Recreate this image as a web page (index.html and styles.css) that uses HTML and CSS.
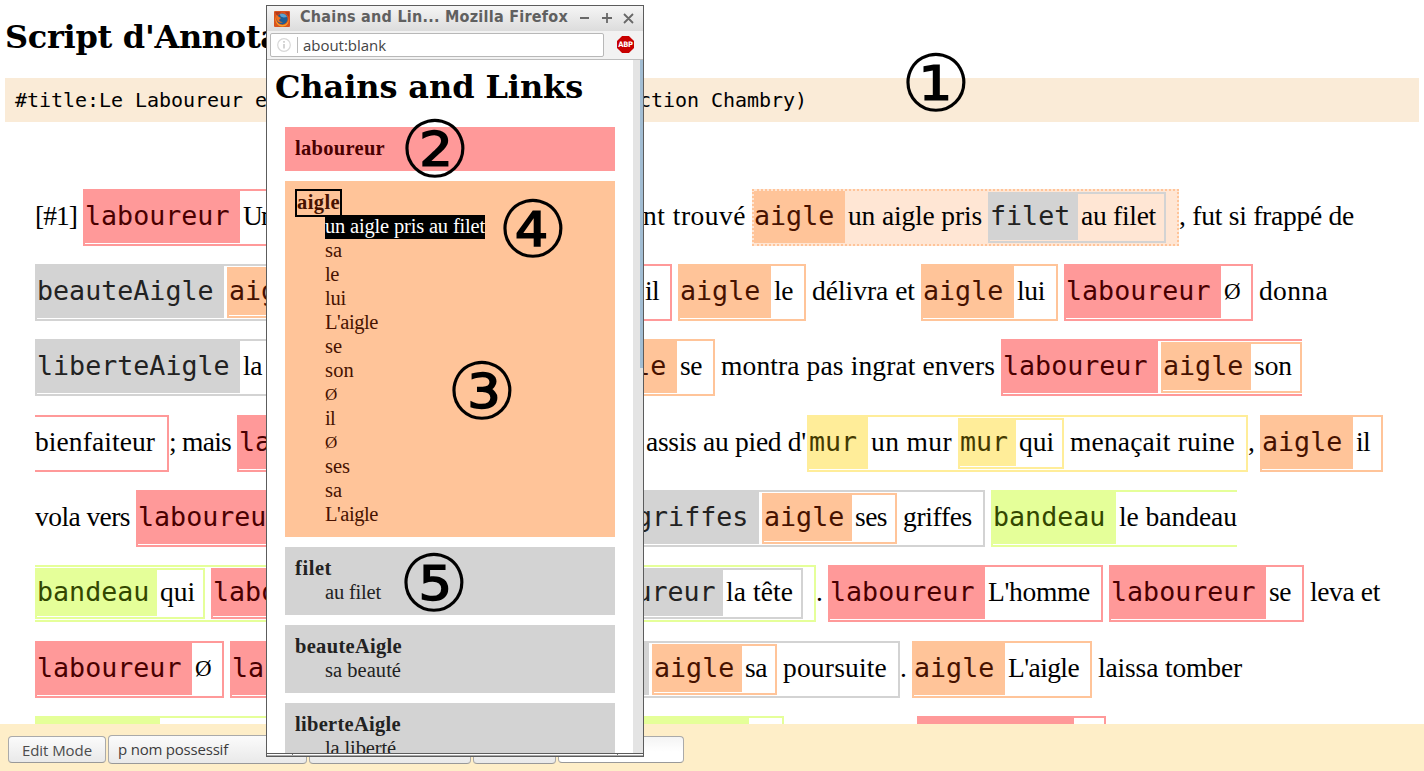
FILE: index.html
```html
<!DOCTYPE html>
<html lang="fr">
<head>
<meta charset="utf-8">
<title>Script d'Annotation</title>
<link rel="stylesheet" href="styles.css">
</head>
<body>
<main class="page">
  <h1 class="page-title">Script d'Annotation</h1>
  <div class="meta">#title:Le Laboureur et l'Aigle (Ésope, fables, traduction Chambry)</div>
  <section class="doc">
    <div class="line">
      <span class="t" data-x="35,77">[#1]</span>
      <div class="m red" data-x="83,400"><b class="l" data-x="83,240">laboureur</b><span class="t" data-x="243,273">Un</span></div>
      <span class="t" data-x="643,746">nt trouvé</span>
      <div class="m orange selected" data-x="752,1179"><b class="l" data-x="752,845">aigle</b><span class="t" data-x="848,982">un aigle pris</span><div class="m grey" data-x="988,1166"><b class="l" data-x="988,1078">filet</b><span class="t" data-x="1081,1156">au filet</span></div></div>
      <span class="t" data-x="1179,1354">, fut si frappé de</span>
    </div>
    <div class="line">
      <div class="m grey" data-x="35,490"><b class="l" data-x="35,224">beauteAigle</b><div class="m orange" data-x="227,400"><b class="l" data-x="227,317">aigle</b></div></div>
      <div class="m red" data-x="496,672"><span class="t" data-x="645,659">il</span></div>
      <div class="m orange" data-x="678,806"><b class="l" data-x="678,771">aigle</b><span class="t" data-x="774,793">le</span></div>
      <span class="t" data-x="812,915">délivra et</span>
      <div class="m orange" data-x="921,1058"><b class="l" data-x="921,1014">aigle</b><span class="t" data-x="1017,1045">lui</span></div>
      <div class="m red" data-x="1064,1253"><b class="l" data-x="1064,1221">laboureur</b><span class="t small" data-x="1224,1240">Ø</span></div>
      <span class="t" data-x="1259,1328">donna</span>
    </div>
    <div class="line">
      <div class="m grey" data-x="35,400"><b class="l" data-x="35,240">liberteAigle</b><span class="t" data-x="243,262">la</span></div>
      <div class="m orange" data-x="584,715"><b class="l" data-x="584,677">aigle</b><span class="t" data-x="680,702">se</span></div>
      <span class="t" data-x="721,995">montra pas ingrat envers</span>
      <div class="m red open-right" data-x="1001,1302"><b class="l" data-x="1001,1158">laboureur</b><div class="m orange" data-x="1161,1302"><b class="l" data-x="1161,1251">aigle</b><span class="t" data-x="1254,1292">son</span></div></div>
    </div>
    <div class="line">
      <div class="m red open-left" data-x="35,169"><span class="t" data-x="35,155">bienfaiteur</span></div>
      <span class="t" data-x="169,231">; mais</span>
      <div class="m red" data-x="237,420"><b class="l" data-x="237,394">laboureur</b></div>
      <span class="t" data-x="646,806">assis au pied d'</span>
      <div class="m yellow" data-x="807,1248"><b class="l" data-x="807,868">mur</b><span class="t" data-x="871,952">un mur</span><div class="m yellow" data-x="958,1064"><b class="l" data-x="958,1016">mur</b><span class="t" data-x="1019,1054">qui</span></div><span class="t" data-x="1070,1235">menaçait ruine</span></div>
      <span class="t" data-x="1248,1254">,</span>
      <div class="m orange" data-x="1260,1383"><b class="l" data-x="1260,1353">aigle</b><span class="t" data-x="1356,1370">il</span></div>
    </div>
    <div class="line">
      <span class="t" data-x="35,130">vola vers</span>
      <div class="m red" data-x="136,400"><b class="l" data-x="136,293">laboureur</b></div>
      <div class="m grey" data-x="634,985"><b class="l" data-x="634,759">griffes</b><div class="m orange" data-x="762,897"><b class="l" data-x="762,852">aigle</b><span class="t" data-x="855,887">ses</span></div><span class="t" data-x="903,972">griffes</span></div>
      <div class="m lime open-right" data-x="991,1237"><b class="l" data-x="991,1116">bandeau</b><span class="t" data-x="1119,1237">le bandeau</span></div>
    </div>
    <div class="line">
      <div class="m lime open-left" data-x="35,816"><div class="m lime" data-x="35,205"><b class="l" data-x="35,157">bandeau</b><span class="t" data-x="160,195">qui</span></div><div class="m red" data-x="211,420"><b class="l" data-x="211,365">laboureur</b></div><div class="m grey" data-x="505,803"><b class="l" data-x="505,723">teteLaboureur</b><span class="t" data-x="726,793">la tête</span></div></div>
      <span class="t" data-x="816,822">.</span>
      <div class="m red" data-x="828,1103"><b class="l" data-x="828,985">laboureur</b><span class="t" data-x="988,1090">L'homme</span></div>
      <div class="m red" data-x="1109,1304"><b class="l" data-x="1109,1266">laboureur</b><span class="t" data-x="1269,1291">se</span></div>
      <span class="t" data-x="1310,1380">leva et</span>
    </div>
    <div class="line">
      <div class="m red" data-x="35,224"><b class="l" data-x="35,192">laboureur</b><span class="t small" data-x="195,211">Ø</span></div>
      <div class="m red" data-x="230,420"><b class="l" data-x="230,387">laboureur</b></div>
      <div class="m grey" data-x="492,900"><b class="l" data-x="492,649">poursuite</b><div class="m orange" data-x="652,777"><b class="l" data-x="652,742">aigle</b><span class="t" data-x="745,767">sa</span></div><span class="t" data-x="783,887">poursuite</span></div>
      <span class="t" data-x="900,906">.</span>
      <div class="m orange" data-x="912,1092"><b class="l" data-x="912,1005">aigle</b><span class="t" data-x="1008,1079">L'aigle</span></div>
      <span class="t" data-x="1098,1242">laissa tomber</span>
    </div>
    <div class="line">
      <div class="m lime" data-x="35,400"><b class="l" data-x="35,160"></b></div>
      <div class="m lime" data-x="624,784"><b class="l" data-x="624,749"></b></div>
      <div class="m red" data-x="917,1106"><b class="l" data-x="917,1074"></b></div>
    </div>
  </section>
</main>

<footer class="bar">
  <button class="btn edit"><span class="fit" data-w="70">Edit Mode</span></button>
  <div class="btn select"><span class="fit" data-w="110">p nom possessif</span></div>
  <div class="btn copy"></div>
  <div class="btn merge"></div>
  <div class="btn input"></div>
</footer>

<aside class="popup">
  <header class="titlebar">
    <svg class="fox" viewBox="0 0 16 16"><rect width="16" height="16" rx="1" fill="#d9541e"/><path d="M1 1h6L3 5zM11 1h4v5z" fill="#b43a1c"/><circle cx="8.2" cy="8" r="5.4" fill="#1f5d93"/><path d="M6 3c3-1 6 0 7 3-2 0-3 1-5 0-1 0-2-1-2-3z" fill="#5ba3cf"/><path d="M1.5 5c0 6 3 9 7 9 4 0 6-3 6-7 1 5-2 8.500-6 8.500C3.500 15.500.5 11 1.500 5z" fill="#f9a328"/><path d="M2 4c1 0 2 1 3 2l2 1-2 2c1 2 3 2 4 2-3 2-7 0-7-7z" fill="#ee6f1f"/></svg>
    <span class="win-title"><span class="fit" data-w="268">Chains and Lin... Mozilla Firefox</span></span>
    <svg class="ctl" viewBox="0 0 56 12"><path d="M0 5h9M22 5h10M27 0v10M44 1l9 9M53 1l-9 9" fill="none" stroke="#686868" stroke-width="1.800"/></svg>
  </header>
  <div class="toolbar">
    <div class="url">
      <svg class="info" viewBox="0 0 14 14"><circle cx="7" cy="7" r="6.300" fill="none" stroke="#d8d8d8" stroke-width="1.200"/><path d="M7 6v4.500M7 3v1.800" stroke="#d0d0d0" stroke-width="1.800"/></svg>
      <span class="address"><span class="fit" data-w="83">about:blank</span></span>
    </div>
    <div class="abp">ABP</div>
  </div>
  <div class="view">
    <h1 class="pop-title">Chains and Links</h1>
    <div class="chain red"><div class="name"><span class="fit" data-w="90">laboureur</span></div></div>
    <div class="chain orange">
      <div class="name"><span class="fit current" data-w="43">aigle</span></div>
      <div class="link"><span class="fit chosen" data-w="160">un aigle pris au filet</span></div>
      <div class="link"><span class="fit" data-w="17">sa</span></div>
      <div class="link"><span class="fit" data-w="14">le</span></div>
      <div class="link"><span class="fit" data-w="21">lui</span></div>
      <div class="link"><span class="fit" data-w="53">L'aigle</span></div>
      <div class="link"><span class="fit" data-w="17">se</span></div>
      <div class="link"><span class="fit" data-w="29">son</span></div>
      <div class="link"><span class="fit small" data-w="12">Ø</span></div>
      <div class="link"><span class="fit" data-w="10">il</span></div>
      <div class="link"><span class="fit small" data-w="12">Ø</span></div>
      <div class="link"><span class="fit" data-w="25">ses</span></div>
      <div class="link"><span class="fit" data-w="17">sa</span></div>
      <div class="link"><span class="fit" data-w="53">L'aigle</span></div>
    </div>
    <div class="chain grey">
      <div class="name"><span class="fit" data-w="37">filet</span></div>
      <div class="link"><span class="fit" data-w="56">au filet</span></div>
    </div>
    <div class="chain grey">
      <div class="name"><span class="fit" data-w="107">beauteAigle</span></div>
      <div class="link"><span class="fit" data-w="76">sa beauté</span></div>
    </div>
    <div class="chain grey">
      <div class="name"><span class="fit" data-w="106">liberteAigle</span></div>
      <div class="link"><span class="fit" data-w="71">la liberté</span></div>
    </div>
    <div class="scroll"><div class="thumb"></div></div>
  </div>
  <div class="frame"></div>
</aside>

<div class="num n1">①</div>
<div class="num n2">②</div>
<div class="num n3">③</div>
<div class="num n4">④</div>
<div class="num n5">⑤</div>
<script src="layout.js"></script>
</body>
</html>
```
FILE: styles.css
```css
* { box-sizing: border-box; }
body { margin: 0; width: 1424px; height: 771px; overflow: hidden; position: relative; background: #fff; color: #000; font-family: "Liberation Serif", serif; }
.page { height: 724px; overflow: hidden; }
.page-title { margin: 0; padding: 18px 5px 0; height: 78px; font: bold 32px/38px "DejaVu Serif", serif; letter-spacing: -.3px; }
.meta { margin: 0 5px; padding-left: 10px; height: 44px; background: #faebd7; font: 20px/44px "DejaVu Sans Mono", monospace; letter-spacing: -.04px; white-space: pre; }
.doc { padding-top: 66.7px; }
.line { display: flex; height: 75.33px; font-size: 27.5px; line-height: 54px; white-space: pre; }
.line > * { flex: none; }

.red { --c: #ff9999; --ink: #4a0000; }
.orange { --c: #ffc499; --ink: #471200; }
.grey { --c: #d3d3d3; --ink: #222; }
.yellow { --c: #ffed99; --ink: #443a00; }
.lime { --c: #e5ff99; --ink: #334700; }

.t { flex: none; }
.m { flex: none; display: flex; height: 57px; border: 2px solid var(--c); line-height: 50px; }
.m > .m { height: 51px; margin-top: 1px; line-height: 44px; }
.open-left { border-left: 0; }
.open-right { border-right: 0; }
.selected { border-style: dotted; background: #ffe6d4; }
.l { flex: none; height: 52px; background: var(--c); color: var(--ink); font: 26.67px/49.5px "DejaVu Sans Mono", monospace; }
.m > .m > .l { height: 46px; line-height: 43.5px; }
.t.small { font-size: 23px; line-height: 52px; }
.fit.small { font-size: 17px; }

.bar { height: 47px; padding: 11px 8px 0; background: #feeec8; display: flex; gap: 2px; }
.btn { flex: none; margin: 0; height: 29px; padding: 0; border: 1px solid #aaa; border-bottom-color: #999; border-radius: 4px; background: linear-gradient(#fbfbfb, #e9e9e9); color: #3c3c3c; font: 15px/26px "Open Sans", sans-serif; white-space: pre; }
.edit { width: 98px; height: 27px; margin-top: 1px; line-height: 24px; color: #4c4c4c; text-align: left; padding-left: 13px; }
.select { width: 199px; padding-left: 9px; }
.copy { width: 162px; }
.merge { width: 83px; }
.input { width: 126px; height: 27px; margin-top: 1px; background: linear-gradient(#f4f4f4, #fff 60%); }

.popup { position: absolute; left: 266px; top: 5px; width: 378px; height: 752px; border: 1px solid #5c5c5c; background: #fff; display: flex; flex-direction: column; }
.titlebar { height: 25px; flex: none; display: flex; align-items: center; padding-left: 7px; background: linear-gradient(#f5f5f5, #dcdcdc); }
.fox { width: 16px; height: 16px; }
.win-title { margin-left: 10px; width: 268px; color: #606060; font: bold 16px/22px "DejaVu Sans Condensed", "DejaVu Sans", sans-serif; height: 25px; white-space: pre; }
.ctl { width: 56px; height: 12px; margin-left: 12px; }
.toolbar { height: 29px; flex: none; display: flex; background: #f2f2f2; border-bottom: 1px solid #bdbdbd; padding: 2px 3px; }
.url { width: 334px; height: 24px; border: 1px solid #b8b8b8; border-radius: 2px; background: #fff; display: flex; align-items: center; padding-left: 6px; }
.info { width: 14px; height: 14px; }
.address { margin-left: 6px; border-left: 1px solid #bbb; padding-left: 5px; color: #444; font: 15px/16px "Open Sans", sans-serif; white-space: pre; }
.abp { width: 17px; height: 17px; margin: 3px 0 0 13px; background: #c80000; color: #fff; font: bold 7.5px/17px "DejaVu Sans Condensed", "DejaVu Sans", sans-serif; letter-spacing: -.3px; text-align: center; clip-path: polygon(30% 0, 70% 0, 100% 30%, 100% 70%, 70% 100%, 30% 100%, 0 70%, 0 30%); }
.view { flex: 1; min-height: 0; position: relative; overflow: hidden; padding: 0 28px 0 18px; }
.pop-title { margin: 0 0 0 -10px; height: 67px; padding-top: 8px; font: bold 32px/38px "DejaVu Serif", serif; letter-spacing: -.1px; white-space: pre; }
.chain { padding: 10px; margin-bottom: 10px; background: var(--c); color: var(--ink); font-size: 20.5px; line-height: 22px; }
.name, .link { height: 24px; }
.name { font-weight: bold; }
.link { padding-left: 30px; }
.fit { display: inline-block; white-space: pre; vertical-align: top; }
.current { margin-left: 2px; height: 24px; outline: 2px solid #000; }
.chosen { height: 24px; background: #000; color: #fff; }
.chain .small { line-height: 24px; }
.scroll { position: absolute; right: 0; top: 0; bottom: 0; width: 10px; background: #e4e4e4; display: flex; justify-content: flex-end; }
.thumb { width: 3px; height: 308px; background: #a2bdd3; }
.frame { flex: none; height: 3px; margin: 0; border-top: 1px solid #5c5c5c; border-bottom: 1px solid #aaa; background: linear-gradient(#777, #777) 25px 0 / 1px 2px no-repeat, linear-gradient(#777, #777) 350px 0 / 1px 2px no-repeat, #fff; }

.num { position: absolute; width: 60px; height: 60px; font: 79px/60px "DejaVu Sans", sans-serif; display: flex; justify-content: center; }
.n1 { left: 906px; top: 54px; }
.n2 { left: 405px; top: 120px; }
.n3 { left: 452px; top: 362px; }
.n4 { left: 503px; top: 200px; }
.n5 { left: 404px; top: 554px; }
```
FILE: layout.js
```js
// Spread the letters of an element so its text fills the given width.
function fitText(el, width) {
  const range = document.createRange();
  range.selectNodeContents(el);
  const natural = range.getBoundingClientRect().width;
  const count = el.textContent.length;
  el.style.letterSpacing = ((width - natural) / count) + 'px';
  el.style.width = width + 'px';
}

// Each annotation carries its extent "start,end"; turn it into margins and widths.
function place(parent, cursor) {
  for (const el of parent.children) {
    const [start, end] = el.dataset.x.split(',').map(Number);
    if (el.classList.contains('l')) {
      el.style.width = (end - cursor) + 'px';
      cursor = end;
      continue;
    }
    el.style.marginLeft = (start - cursor) + 'px';
    if (el.classList.contains('t')) {
      fitText(el, end - start);
    } else {
      el.style.width = (end - start) + 'px';
      place(el, start + (el.classList.contains('open-left') ? 0 : 2));
    }
    cursor = end;
  }
}

document.querySelectorAll('.line').forEach(line => place(line, 0));
document.querySelectorAll('.fit').forEach(el => fitText(el, Number(el.dataset.w)));
```
